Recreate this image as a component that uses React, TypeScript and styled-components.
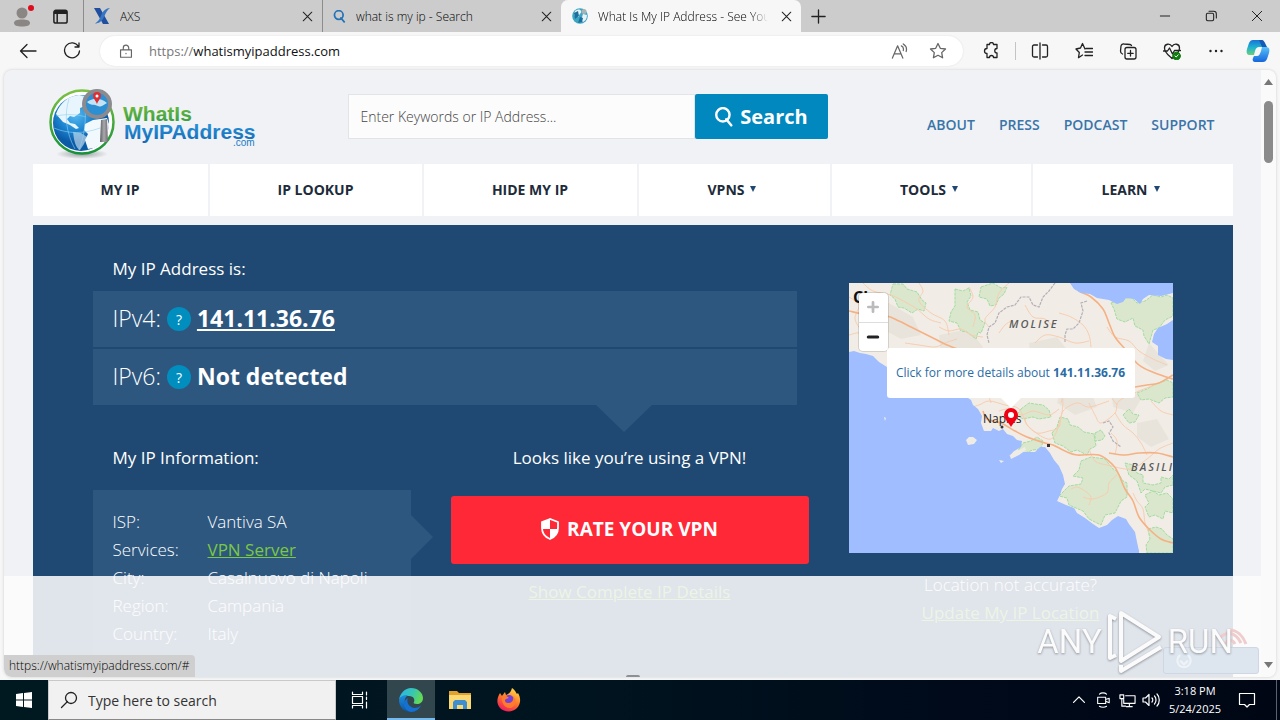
import React from 'react';
import styled, { createGlobalStyle, css } from 'styled-components';

const Global = createGlobalStyle`
  * { box-sizing: border-box; }
  body { margin: 0; font-family: "Open Sans", "Noto Sans", sans-serif; overflow: hidden; }
  button { font: inherit; color: inherit; border: 0; padding: 0; background: none; cursor: pointer; }
  a { color: inherit; }
  svg { display: block; flex: none; }
  h2, p, dl, dd, ul { margin: 0; padding: 0; }
`;

const Desktop = styled.div`
  display: flex;
  flex-direction: column;
  height: 100vh;
  background: #f7f7f7;
`;

/* ---------- browser chrome ---------- */

const TabStrip = styled.header`
  display: flex;
  flex: none;
  height: 32px;
  background: #cccccc;
  color: #000;
  font-size: 12px;
  font-weight: 300;
`;

const StripTools = styled.div`
  display: flex;
  width: 83px;
`;

const IconButton = styled.button<{ $w: number }>`
  width: ${(p) => p.$w}px;
  flex: none;
  display: flex;
  align-items: center;
  justify-content: center;
`;

const Tab = styled.div<{ $active?: boolean }>`
  display: flex;
  align-items: center;
  gap: 10px;
  width: 239px;
  padding: 0 7px 0 10px;
  border-left: 1px solid #8c8c8c;
  ${(p) => p.$active && css`
    width: 240px;
    border-color: #f7f7f7;
    border-radius: 7px 7px 0 0;
    background: #f7f7f7;
  `}
`;

const TabTitle = styled.span<{ $fade?: boolean }>`
  flex: 1;
  overflow: hidden;
  white-space: nowrap;
  ${(p) => p.$fade && css`
    mask-image: linear-gradient(to right, #000 90%, transparent);
  `}
`;

const Spacer = styled.div`
  flex: 1;
`;

const Toolbar = styled.div`
  display: flex;
  flex: none;
  align-items: center;
  height: 38px;
  padding: 0 2px 0 6px;
`;

const AddressBar = styled.div`
  display: flex;
  align-items: center;
  flex: 1;
  height: 30px;
  margin: 0 6px;
  padding: 0 6px 0 19px;
  border-radius: 15px;
  background: #fff;
  box-shadow: 0 0 2px #ddd;
`;

const AddressText = styled.span`
  flex: 1;
  padding-left: 16px;
  font-size: 13px;
  color: #111;
`;

const Scheme = styled.span`
  color: #777;
`;

const Divider = styled.span`
  width: 1px;
  height: 18px;
  margin: 0 2px;
  background: #c4c4c4;
`;

const Viewport = styled.div`
  position: relative;
  display: flex;
  flex: 1;
  min-height: 0;
  margin: 0 4px 3px;
  border-radius: 8px;
  overflow: hidden;
  background: #f0f2f5;
  box-shadow: 0 0 3px #ccc;
`;

const ScrollTrack = styled.div`
  display: flex;
  flex-direction: column;
  align-items: center;
  flex: none;
  width: 15px;
  padding: 9px 0;
  background: #fafafa;
`;

const ScrollThumb = styled.div`
  width: 9px;
  height: 62px;
  margin: 16px 0 auto;
  border-radius: 5px;
  background: #8b8b8b;
`;

const StatusBubble = styled.div`
  position: absolute;
  left: 0;
  bottom: 0;
  padding: 2px 6px 3px 5px;
  border-radius: 0 4px 0 6px;
  background: #cfcfcf;
  color: #000;
  font-size: 12px;
  font-weight: 300;
  line-height: 17px;
`;

/* ---------- web page ---------- */

const Page = styled.div`
  position: relative;
  flex: 1;
  min-width: 0;
  overflow: hidden;
`;

const Container = styled.div`
  max-width: 1200px;
  margin: 0 auto;
`;

const SiteHeader = styled.div`
  display: flex;
  align-items: flex-start;
  height: 94px;
  padding: 18px 18px 0 16px;
`;

const Logo = styled.a`
  display: flex;
  width: 299px;
`;

const SearchForm = styled.form`
  display: flex;
  width: 480px;
  height: 45px;
  margin-top: 6px;
`;

const SearchInput = styled.input`
  flex: 1;
  min-width: 0;
  padding: 0 12px;
  border: 1px solid #e2e5e8;
  background: #fcfcfc;
  color: #555;
  font: 300 14px "Open Sans", sans-serif;
  &::placeholder { color: #444; opacity: 1; }
`;

const SearchButton = styled.button`
  display: flex;
  align-items: center;
  justify-content: center;
  gap: 6px;
  width: 133px;
  border-radius: 2px;
  background: #0088bf;
  color: #fff;
  font-size: 20px;
  font-weight: 700;
`;

const TopLinks = styled.nav`
  display: flex;
  gap: 24px;
  margin: 27px 0 0 auto;
  font-size: 14px;
  line-height: 20px;
  font-weight: 600;
  color: #3a74a8;
  a { text-decoration: none; }
`;

const MainNav = styled.nav`
  display: flex;
  gap: 2px;
  height: 52px;
  margin-bottom: 9px;
`;

const NavItem = styled.a<{ $grow: number }>`
  flex: ${(p) => p.$grow} 1 0;
  display: flex;
  align-items: center;
  justify-content: center;
  gap: 6px;
  padding-bottom: 2px;
  background: #fff;
  color: #1d2b3a;
  font-size: 14px;
  font-weight: 700;
  text-decoration: none;
`;

const Caret = styled.span`
  margin-right: 4px;
  border: 3px solid transparent;
  border-top: 6px solid #1f4972;
  border-bottom: 0;
`;

const Hero = styled.main`
  display: grid;
  grid-template-columns: 1fr 324px;
  gap: 40px;
  min-height: 600px;
  padding: 0 60px;
  background: #1f4972;
  color: #fff;
  font-size: 17px;
  font-weight: 300;
`;

const Label = styled.h2<{ $center?: boolean }>`
  padding: 0 ${(p) => (p.$center ? 0 : 20)}px;
  font-size: 17px;
  line-height: 24px;
  font-weight: 400;
  text-align: ${(p) => (p.$center ? 'center' : 'left')};
`;

const AddressPanel = styled.section`
  padding-top: 32px;
`;

const AddressRows = styled.div`
  position: relative;
  display: grid;
  gap: 2px;
  margin: 10px 12px 0 0;
  &::after {
    content: "";
    position: absolute;
    top: 100%;
    right: 145px;
    border: 28px solid transparent;
    border-top: 27px solid #2d577f;
    border-bottom: 0;
  }
`;

const AddressRow = styled.div`
  display: flex;
  align-items: center;
  gap: 6px;
  height: 56px;
  padding: 0 20px 2px;
  background: #2d577f;
  font-size: 23px;
`;

const HelpButton = styled.button`
  width: 24px;
  height: 24px;
  margin-top: 2px;
  border-radius: 50%;
  background: #008ebf;
  font-size: 14px;
  font-weight: 400;
`;

const Strong = styled.strong`
  font-weight: 700;
`;

const Columns = styled.div`
  display: grid;
  grid-template-columns: 318fr 358fr;
  gap: 40px;
  margin-top: 41px;
`;

const InfoCard = styled.div`
  position: relative;
  min-height: 240px;
  margin-top: 20px;
  padding: 18px 20px;
  background: #2d577f;
  &::after {
    content: "";
    position: absolute;
    top: 25px;
    left: 100%;
    border: 22px solid transparent;
    border-left-color: #2d577f;
    border-right: 0;
  }
`;

const InfoList = styled.dl`
  display: grid;
  grid-template-columns: 95px 1fr;
  line-height: 28px;
`;

const GreenLink = styled.a`
  color: #7bc843;
  font-weight: 400;
`;

const VpnColumn = styled.div`
  display: flex;
  flex-direction: column;
`;

const RateButton = styled.button`
  display: flex;
  align-items: center;
  justify-content: center;
  gap: 8px;
  height: 68px;
  margin: 26px 0 16px;
  padding-bottom: 2px;
  border-radius: 3px;
  background: #ff2837;
  color: #fff;
  font-size: 19px;
  font-weight: 700;
`;

const Centered = styled.p`
  line-height: 24px;
  text-align: center;
`;

const MapColumn = styled.aside`
  padding-top: 58px;
  line-height: 28px;
  text-align: center;
`;

const MapBox = styled.div`
  position: relative;
  height: 270px;
  margin-bottom: 18px;
  overflow: hidden;
  font-size: 12px;
`;

const ZoomControls = styled.div`
  position: absolute;
  top: 10px;
  left: 10px;
  display: grid;
  width: 29px;
  height: 58px;
  border-radius: 4px;
  background: #fff;
  box-shadow: 0 0 0 1px rgba(0, 0, 0, 0.12);
  button { display: grid; place-items: center; }
  button + button { border-top: 1px solid #ddd; }
`;

const Popup = styled.a`
  position: absolute;
  top: 65px;
  left: 38px;
  width: 248px;
  border-radius: 3px;
  background: #fff;
  color: #2a6ca5;
  line-height: 50px;
  font-weight: 400;
  white-space: nowrap;
  text-decoration: none;
  &::after {
    content: "";
    position: absolute;
    top: 100%;
    left: 114px;
    border: 10px solid transparent;
    border-top-color: #fff;
    border-bottom: 0;
  }
`;

const AdOverlay = styled.div`
  position: absolute;
  inset: auto 0 0;
  height: 101px;
  background: rgba(253, 252, 253, 0.87);
`;

const AdCard = styled.div`
  position: absolute;
  right: 2px;
  bottom: 3px;
  width: 96px;
  height: 27px;
  padding: 2px 10px;
  border: 1px solid #cfd8e2;
  border-radius: 3px;
  background: #dde5ee;
`;

const Signal = styled.svg`
  position: absolute;
  right: 12px;
  bottom: 30px;
`;

const AdNotch = styled.div`
  position: absolute;
  bottom: 0;
  left: 50%;
  width: 14px;
  height: 2px;
  margin-left: -7px;
  border-radius: 6px 6px 0 0;
  background: #8c9096;
`;

const Watermark = styled.div`
  position: absolute;
  right: 28px;
  bottom: 4px;
  display: flex;
  align-items: center;
  gap: 5px;
  color: #fbfbfb;
  font: 400 33px/60px Roboto, sans-serif;
  filter: drop-shadow(0 1px 1px rgba(90, 95, 100, 0.6));
`;

/* ---------- taskbar ---------- */

const Taskbar = styled.footer`
  display: flex;
  flex: none;
  height: 40px;
  background: linear-gradient(to right, #001820, #00141f 45%, #000a1a 75%, #000614);
  color: #fff;
`;

const TaskSearch = styled.label`
  display: flex;
  align-items: center;
  gap: 10px;
  width: 288px;
  padding-left: 11px;
  border: 1px solid #c9c9c9;
  border-bottom-color: #888;
  background: #f1f1f1;
  input {
    flex: 1;
    min-width: 0;
    border: 0;
    padding: 0;
    background: none;
    font: 14px "Open Sans", sans-serif;
  }
  input::placeholder { color: #333; opacity: 1; }
`;

const TaskApp = styled.button<{ $active?: boolean }>`
  display: flex;
  align-items: center;
  justify-content: center;
  width: 48px;
  margin-right: 1px;
  border-top: 2px solid transparent;
  border-bottom: 2px solid transparent;
  ${(p) => p.$active && css`
    margin-left: 2px;
    border-bottom-color: #76b9ed;
    background: #32464e;
  `}
`;

const Clock = styled.time`
  width: 64px;
  padding-top: 2px;
  font-size: 11px;
  line-height: 18px;
  text-align: center;
`;

const ShowDesktop = styled.button`
  width: 4px;
  margin-left: 9px;
  border-left: 1px solid #5a636b;
`;

/* ---------- drawings ---------- */

const Line: React.FC<{ d: string; size?: number; color?: string; w?: number; children?: React.ReactNode }> = ({
  d, size = 18, color = '#222', w = 1.3, children,
}) => (
  <svg width={size} height={size} viewBox="0 0 18 18" fill="none" stroke={color} strokeWidth={w}
    strokeLinecap="round" strokeLinejoin="round" aria-hidden="true">
    <path d={d} />
    {children}
  </svg>
);

const STAR = 'M9 1.5l2.3 4.8 5.2.7-3.8 3.6.9 5.2L9 13.3l-4.6 2.5.9-5.2L1.500 7l5.200-.7z';

const CloseIcon = () => <Line size={11} w={1.700} d="M2 2l14 14M16 2L2 16" />;

const ProfileIcon = () => (
  <svg width="24" height="26" viewBox="0 0 24 26" aria-hidden="true">
    <circle cx="12" cy="10" r="5.500" fill="#8a8684" />
    <path d="M4 20c0-2.500 3-3.500 8-3.500s8 1 8 3.500-3 3.500-8 3.500-8-1-8-3.500z" fill="#8a8684" />
    <circle cx="21" cy="5" r="3" fill="#e00b1c" />
  </svg>
);

const AxsIcon = () => (
  <svg width="16" height="16" viewBox="0 0 16 16" aria-hidden="true">
    <path d="M0 0h6l9 16H9z" fill="#1f4f9e" />
    <path d="M16 0c-4 0-7 3-8.500 6.500C6 10 5 13 1 15.500c3.500 0 7-2 9-6.500C11.500 5.500 13 2 16 0z" fill="#3576c4" />
  </svg>
);

const MiniGlobe = () => (
  <svg width="16" height="16" viewBox="0 0 16 16" aria-hidden="true">
    <circle cx="8" cy="8" r="7.800" fill="#3da5c4" />
    <path d="M3 3c3-2 5-2 6 0s-2 3-2 5-3 1-5-1zM11 6l4 1c0 4-2 6-4 7-2-2-1-5 0-8z" fill="#e7f2f4" />
    <path d="M2 5l4-2 1 5-4 3zM8 9l3 1-1 4-4 1z" fill="#1c6f9c" />
    <circle cx="12" cy="3.500" r="2.500" fill="#a8b4b6" />
  </svg>
);

const CopilotIcon = () => (
  <svg width="24" height="24" viewBox="0 0 24 24" aria-hidden="true">
    <defs>
      <linearGradient id="cpa" x1="0" y1="0" x2="0" y2="1">
        <stop offset="0" stopColor="#1773d8" /><stop offset=".5" stopColor="#1fb3cf" /><stop offset="1" stopColor="#6ccf7c" />
      </linearGradient>
      <linearGradient id="cpb" x1="0" y1="0" x2="0" y2="1">
        <stop offset="0" stopColor="#5ac0f7" /><stop offset="1" stopColor="#1467dd" />
      </linearGradient>
    </defs>
    <path d="M7 1h8c2 0 3 2 2 4l-1 3h-3c-2 0-3 1-4 4l-1 4H4c-3 0-4-2-3-6l2-6c1-2 2-3 4-3z" fill="url(#cpa)" />
    <path d="M17 23H9c-2 0-3-2-2-4l1-2h3c2 0 3-2 4-5l1-4h4c3 0 4 2 3 6l-2 6c-1 2-2 3-4 3z" fill="url(#cpb)" />
    <path d="M13 1h3c2 0 3 3 5 7h-5z" fill="#1558b5" />
  </svg>
);

const SiteLogo = () => (
  <svg width="208" height="72" viewBox="0 0 208 72" role="img" aria-label="What Is My IP Address logo">
    <defs>
      <radialGradient id="globe" cx=".4" cy=".35">
        <stop offset="0" stopColor="#58baf0" /><stop offset=".6" stopColor="#1c84cf" /><stop offset="1" stopColor="#0b5aa6" />
      </radialGradient>
      <linearGradient id="ring" x1="0" y1="0" x2="0" y2="1">
        <stop offset="0" stopColor="#7cc142" /><stop offset="1" stopColor="#17913a" />
      </linearGradient>
      <linearGradient id="green" x1="0" y1="0" x2="0" y2="1">
        <stop offset="0" stopColor="#7cbf3e" /><stop offset="1" stopColor="#2f9a45" />
      </linearGradient>
      <linearGradient id="blue" x1="0" y1="0" x2="0" y2="1">
        <stop offset="0" stopColor="#2a9be0" /><stop offset="1" stopColor="#1668b4" />
      </linearGradient>
      <linearGradient id="grip" x1="0" y1="0" x2="1" y2="0">
        <stop offset="0" stopColor="#5f5f63" /><stop offset=".5" stopColor="#a9a9ad" /><stop offset="1" stopColor="#6e6e72" />
      </linearGradient>
      <radialGradient id="shade"><stop offset="0" stopColor="#9a9fa3" /><stop offset="1" stopColor="#9a9fa3" stopOpacity="0" /></radialGradient>
    </defs>
    <ellipse cx="33" cy="66" rx="26" ry="5" fill="url(#shade)" />
    <circle cx="33" cy="34" r="31.500" fill="#fff" stroke="url(#ring)" strokeWidth="2.500" />
    <circle cx="32" cy="35" r="28" fill="url(#globe)" />
    <path d="M7 26C11 15 19 8 30 7l6 1-2 5 2 5-5 2 0 5-6 4-4-1-3 3 3 4 5 1 4 4-3 1-6-4-7-3z" fill="#e9f5fc" />
    <path d="M36 36l8-4 14-2 2 6c0 10-6 20-15 24l-6 1-3-9 3-6-4-4z" fill="#f2f9fd" />
    <path d="M24 44l8 1 6 4-3 7-4 6c-3-1-5-6-6-11z" fill="#eef7fc" opacity=".55" />
    <path d="M5 40c14 6 30 6 46 0M20 11c-5 15-3 34 6 50M7 28c10-2 20-2 30 1M34 8c4 15 3 36-4 54" fill="none" stroke="#8fd0f4" strokeWidth=".6" />
    <path d="M52 32l6-1 1 23h-8z" fill="url(#grip)" />
    <circle cx="48" cy="16" r="13" fill="#2c8ed3" stroke="#8b8b8f" strokeWidth="4" />
    <path d="M38 14c5-4 13-5 20 1-3 1-5 5-9 3s-7 0-11-4z" fill="#c5e2f3" />
    <path d="M48 4a4 4 0 0 1 4 4c0 2-3 5-4 8-1-3-4-6-4-8a4 4 0 0 1 4-4z" fill="#dc2f34" />
    <circle cx="48" cy="8" r="1.500" fill="#fff" />
    <g fontFamily="Liberation Sans" fontWeight="700" fontSize="21">
      <text x="74" y="33" fill="url(#green)">WhatIs</text>
      <text x="75" y="51" fill="url(#blue)">MyIPAddress</text>
    </g>
    <text x="184" y="58" fontSize="10" fontFamily="Liberation Sans" fill="#1c7bc4">.com</text>
  </svg>
);

const SearchIcon: React.FC<{ size: number; color: string; w: number; flip?: boolean }> = ({ size, color, w, flip }) => (
  <Line size={size} color={color} w={w} d={flip ? 'M7.500 10.500L1.500 16.500' : 'M11 11L15.500 16.500'}>
    <circle cx={flip ? 11 : 8} cy="7" r={flip ? 5.500 : 6} />
  </Line>
);

const ShieldIcon = () => (
  <svg width="18" height="22" viewBox="0 0 18 22" aria-hidden="true">
    <path d="M9 1L1 4v6c0 5 3 9 8 11 5-2 8-6 8-11V4z" fill="#ff2837" stroke="#fff" strokeWidth="1.800" />
    <path d="M9 1L1 4v7h8zM9 11v10c5-2 8-6 8-10z" fill="#fff" />
  </svg>
);

/* Turns a list of "x,y" points into a smooth curve through all of them. */
const curve = (list: string) => {
  const p = list.split(' ').map((s) => s.split(',').map(Number));
  let d = `M${p[0][0]} ${p[0][1]}`;
  for (let i = 0; i < p.length - 1; i++) {
    const a = p[Math.max(i - 1, 0)];
    const b = p[i];
    const c = p[i + 1];
    const e = p[Math.min(i + 2, p.length - 1)];
    d += `C${b[0] + (c[0] - a[0]) / 6} ${b[1] + (c[1] - a[1]) / 6} ${c[0] - (e[0] - b[0]) / 6} ${c[1] - (e[1] - b[1]) / 6} ${c[0]} ${c[1]}`;
  }
  return d;
};

const MINOR_ROADS = [
  '0,14 10,22 6,36 14,50', '70,0 74,8 70,18 82,30 96,38 100,52', '160,0 150,10 146,24 136,36 140,44',
  '150,50 156,42 162,38', '14,0 24,8 42,12 58,20 68,26 80,36 92,40', '116,126 130,122 140,118 156,122 170,126 180,144 202,156 212,134 214,116',
  '176,134 178,142 188,150 200,148 210,144 214,128 228,120 240,124 260,118', '240,120 246,132 252,140 266,130 270,118 290,108 306,102',
  '240,166 246,178 258,182 282,186 298,176 310,166 324,160', '262,150 268,158 266,172', '266,130 274,142 284,150 292,160 298,172',
  '284,210 288,218 294,226 296,240 300,250', '268,192 260,200 258,210 244,216 234,214', '210,30 222,34 234,42 240,52 242,64',
  '56,60 70,62 86,64 96,60 108,56', '222,206 228,204 236,208 242,214 240,222', '128,100 130,106 138,110 142,120',
  '150,128 160,126 172,132 184,128 200,132 210,126', '0,52 12,50 22,58 34,62 40,72', '186,60 196,52 210,54 226,60 240,58',
  '120,4 124,14 118,24 126,32 124,44', '258,44 266,54 280,58 290,68 304,76 318,82', '90,44 100,48 112,46 122,52 134,54',
  '302,118 312,128 324,132', '208,96 214,108 212,120', '262,90 266,100 262,112 268,122', '176,22 184,34 196,36 204,44',
];

const MAJOR_ROADS = [
  '0,28 20,32 38,33 50,38 62,44 74,50 86,56 98,62 114,68', '222,0 230,8 242,14 254,26 260,40 266,54 276,66 290,82 306,90 324,96',
  '134,128 138,136 152,140 166,148 178,154 196,160 204,162 216,168 228,172 250,172 264,182 270,192 276,206 284,218 290,234 300,246 312,256 324,260',
  '260,170 276,172 290,170 308,170 324,174', '286,104 298,102 310,100 324,92',
];

const RegionMap = () => (
  <svg width="324" height="270" viewBox="0 0 324 270" role="img" aria-label="Map of the Naples area">
    <rect width="324" height="270" fill="#f1ede6" />
    <g fill="#e9e4db">
      <path d="M10 18l30 2 24 14 8 18-20 4-30-16zM90 52l30-6 14 18-16 14-26-6zM180 60l28-6 16 20-14 16-28-8zM212 102l26-2 10 24-22 8-18-12zM262 106l16-6 14 16-8 14-20-6zM288 140l20-4 12 20-18 8-14-10zM300 60l20 22-14 6-12-10z" />
    </g>
    <g fill="#dae7cd" stroke="#a3dca0" strokeWidth="1" strokeDasharray="3 1" strokeLinejoin="round">
      <path d="M44 1l10 0 4 5 10 3 5 8 4 3-2 8-6-2-6 4-8-5-6-1-3-8-5-4z" />
      <path d="M106 6l8 2 6-3 2 8-4 6 3 8 8 2 2 8 5 3-4 10-3-1-2 7-9-7-6-1-4-8-8-2 2-9 4-6z" />
      <path d="M132 4l12-4 8 5 6-1-3 7-5 4-3 7-6 1-3-7-8-2z" />
      <path d="M262 20l8-3 12-3 6 6 8-2 8-6 8 2 6-2 6 3v18l-8 4-6 8-6 2-4 14-5-8-1-6-8-4-2-8-8 4-8-3-3-10z" />
      <path d="M172 126l8-6 6 1 8 1 6 5 2 7-12 2-6-2-10 2-6-4z" />
      <path d="M203 150l5-6 3-10 8 2 2 6 8 2 6 5 10 2 2 12-6 3-3 6-10-5-6 2-8-6-8-3z" />
      <path d="M288 110l10-4 8-5 12-4 6 3v14l-8 1-6 5-10-4-8 1z" />
      <path d="M274 132l6-6 4 5 6 1-4 7-6 1z" />
      <path d="M174 160l8-2 6-4 6 4-2 8-8 1-8 3-10 2z" />
      <path d="M232 178l10-4 14 2 8 10 4 2 6 10 4 2v14l-6 4-6 12-10 2-4 10-12-6-6-8-14-6-2-7-8-2 10-10 12-2 2-6-10-2 6-6z" />
      <path d="M276 180l8 2 4 8 6 2 0 8 10 2 8-2v-6l8 2 4-4v10l-8 2-4 6-16-4-4 4-4-12-8-6z" />
      <path d="M296 212l8-4 6 4 8-2 6 6v14l-8-2-2 8-8-4-6 2-4-10 4-4z" />
      <path d="M299 246l8-2 6 2 5 6 6 4v14h-26l-1-8 4-6z" />
      <path d="M246 150l6-3 4 6-3 4-7 1z" />
    </g>
    <g fill="none" stroke="#f8cdb0" strokeWidth="1">
      {MINOR_ROADS.map((r) => <path key={r} d={curve(r)} />)}
    </g>
    <g fill="none" stroke="#f5b183" strokeWidth="1.600">
      {MAJOR_ROADS.map((r) => <path key={r} d={curve(r)} />)}
    </g>
    <g fill="none" stroke="#b5afb8" strokeWidth="1.200" strokeDasharray="3 1">
      <path d="M206 0l-6 8-6 6-4 10-6-2-4-8-8 0-6 8-8 2-8 6-4 10-6 4-2 8 2 8M238 18l-6 2 2 8-4 12-6 6-6 0-2 6 0 8M254 140l6-2 4 6-4 6 4 8 8 6" />
    </g>
    <g fill="#9fbdff">
      <path d="M0 69l5-1 6 2 6 1 7 2 6 6 8 5 16 14 24 10 17 0 24 7 3 2 2 5 5 4 4 7-1 7 3 8h7l2-3 6 3 4-2 4 5 6 2 4 4 5 1-1 6-5 3-7 6 8-2 5-2 8 0 5 0 5-5h5l5 6 4 7 5 6 4 9 2 9-3 5-2 6-3 6 9 4 8 3 3 5 8 5 8 6 6 4 8-3 5-5 6-4 8 3 3 5 6 8 2 10 2 9V270H0z" />
      <path d="M221 0l4 6 7 4 9 1 7 4 12 2 8 4 6-2 3-4 8 1 6 5 3-5 6-4 12 1 12-3V0zM324 37l-6 4-9 4-4 6-2 8 6 4 0 9 8 4 7 1z" />
    </g>
    <g fill="#efece5">
      <path d="M117 157l3-3 4 0 4 3-3 4-6 1zM150 177l5 1-3 2zM161 173l4-5 5-1 6-3 1 3-7 5-8 4zM35 134l2 1-1 3z" />
    </g>
    <g fill="#5c5c5c" fontFamily="Open Sans" fontSize="11" fontStyle="italic" fontWeight="600" letterSpacing="2">
      <text x="160" y="45">MOLISE</text>
      <text x="282" y="188">BASILI</text>
    </g>
    <text x="4" y="20" fontSize="16" fontFamily="Open Sans" fontWeight="700" fill="#111">Ch</text>
    <text x="134" y="140" fontSize="12" fontFamily="Open Sans" fontWeight="500" fill="#222">Naples</text>
    <circle cx="153" cy="144" r="1.500" fill="#333" />
    <rect x="198" y="161" width="3" height="3" fill="#333" />
    <path d="M162 125a7 7 0 0 1 7 7c0 4-5 8-7 12-2-4-7-8-7-12a7 7 0 0 1 7-7z" fill="#f00012" />
    <circle cx="162" cy="132" r="3" fill="#fff" />
  </svg>
);

const EdgeIcon = () => (
  <svg width="24" height="24" viewBox="0 0 24 24" aria-hidden="true">
    <defs>
      <linearGradient id="eg" x1="0" y1="0" x2="1" y2=".3">
        <stop offset="0" stopColor="#2bb4ec" /><stop offset=".6" stopColor="#37c6b4" /><stop offset="1" stopColor="#62d957" />
      </linearGradient>
      <linearGradient id="eb" x1="0" y1="0" x2="0" y2="1">
        <stop offset="0" stopColor="#1c8ede" /><stop offset="1" stopColor="#0c55a8" />
      </linearGradient>
    </defs>
    <path d="M0 12C1 5 6 0 12 0c7 0 12 5 12 10 0 4-3 6-6 6-3 0-4-1-3-2 1-2 0-6-5-6C5 8 1 9 0 12z" fill="url(#eg)" />
    <path d="M0 12c1-4 5-5 9-5-3 2-4 5-3 8 1 5 6 8 14 5-2 3-5 4-8 4C5 24 0 19 0 12z" fill="url(#eb)" />
    <path d="M9 10c-2 4 1 9 6 10 3 0 6-1 7-3-1 4-6 7-10 7-4-1-7-4-7-8 0-3 2-5 4-6z" fill="#1570cf" />
  </svg>
);

const FolderIcon = () => (
  <svg width="22" height="20" viewBox="0 0 22 20" aria-hidden="true">
    <path d="M0 1h8l2 2h12v16H0z" fill="#e0a12f" />
    <path d="M0 5h22v14H0z" fill="#fbd872" />
    <path d="M4 19v-7l2-2h10l2 2v7h-4v-4H8v4z" fill="#3f8fd0" />
  </svg>
);

const FirefoxIcon = () => (
  <svg width="24" height="24" viewBox="0 0 24 24" aria-hidden="true">
    <defs>
      <linearGradient id="ff" x1=".8" y1="0" x2=".3" y2="1">
        <stop offset="0" stopColor="#ffe14a" /><stop offset=".5" stopColor="#ff7a2a" /><stop offset="1" stopColor="#ef1a5c" />
      </linearGradient>
    </defs>
    <path d="M3 5l2 3 3-4 1 3c3-1 5-3 6-7 4 3 4 5 5 6l1-1c3 5 3 11-1 15-5 5-13 4-17 0-4-5-3-10 0-15z" fill="url(#ff)" />
    <circle cx="12" cy="12" r="5" fill="#7541d8" />
    <path d="M5 8c3-1 5 0 7 2l-3 1c-2 1-1 4 2 4 4 0 6-3 5-7 4 4 3 11-3 12-6 0-9-6-8-12z" fill="#ff7a2c" />
  </svg>
);

/* ---------- data ---------- */

const NAV = [
  { label: 'MY IP', grow: 175 },
  { label: 'IP LOOKUP', grow: 212 },
  { label: 'HIDE MY IP', grow: 213 },
  { label: 'VPNS', grow: 191, menu: true },
  { label: 'TOOLS', grow: 199, menu: true },
  { label: 'LEARN', grow: 200, menu: true },
];

const INFO: [string, React.ReactNode][] = [
  ['ISP:', 'Vantiva SA'],
  ['Services:', <GreenLink href="#">VPN Server</GreenLink>],
  ['City:', 'Casalnuovo di Napoli'],
  ['Region:', 'Campania'],
  ['Country:', 'Italy'],
];

const BrowserTab: React.FC<{ icon: React.ReactNode; title: string; active?: boolean }> = ({ icon, title, active }) => (
  <Tab $active={active}>
    {icon}
    <TabTitle $fade={active}>{title}</TabTitle>
    <IconButton $w={16} aria-label={`Close ${title}`}><CloseIcon /></IconButton>
  </Tab>
);

export default function App() {
  return (
    <Desktop>
      <Global />
      <TabStrip>
        <StripTools>
          <IconButton $w={44} aria-label="Profile"><ProfileIcon /></IconButton>
          <IconButton $w={32} aria-label="Tab actions">
            <Line size={17} w={1.600} d="M2 4.500a2 2 0 0 1 2-2h10a2 2 0 0 1 2 2V14a2 2 0 0 1-2 2H4a2 2 0 0 1-2-2zM2.500 4h13M2.500 5.500h13M5.500 6v10" />
          </IconButton>
        </StripTools>
        <BrowserTab icon={<AxsIcon />} title="AXS" />
        <BrowserTab icon={<SearchIcon size={13} color="#2472b8" w={2.400} />} title="what is my ip - Search" />
        <BrowserTab icon={<MiniGlobe />} title="What Is My IP Address - See Your" active />
        <IconButton $w={34} aria-label="New tab"><Line size={17} w={1.400} d="M9 2v14M2 9h14" /></IconButton>
        <Spacer />
        <IconButton $w={46} aria-label="Minimize"><Line size={12} w={1.500} d="M2 9h14" /></IconButton>
        <IconButton $w={46} aria-label="Restore">
          <Line size={12} w={1.600} d="M2 7a2 2 0 0 1 2-2h7a2 2 0 0 1 2 2v7a2 2 0 0 1-2 2H4a2 2 0 0 1-2-2zM6 2h7a4 4 0 0 1 4 4v6" />
        </IconButton>
        <IconButton $w={46} aria-label="Close window"><Line size={12} w={1.500} d="M2 2l14 14M16 2L2 16" /></IconButton>
      </TabStrip>

      <Toolbar>
        <IconButton $w={44} aria-label="Back"><Line d="M1.500 9h15.500M8 2.500L1.500 9 8 15.500" /></IconButton>
        <IconButton $w={44} aria-label="Refresh"><Line d="M15.500 4.500A7.500 7.500 0 1 0 16.500 9M16 1v4h-4" /></IconButton>
        <AddressBar>
          <Line size={14} color="#666" w={1.500} d="M2 7.500h14V17H2zM5.500 7.500V5a3.500 3.500 0 0 1 7 0v2.500M9 12v.5" />
          <AddressText><Scheme>https://</Scheme>whatismyipaddress.com</AddressText>
          <IconButton $w={40} aria-label="Read aloud">
            <Line color="#666" size={17} d="M1.500 16L7 3l5.500 13M3.500 11.500h7M11 3c2 1 2.500 3 2 5M13 1c3 2 4 5 3 8" />
          </IconButton>
          <IconButton $w={38} aria-label="Add to favorites"><Line color="#666" d={STAR} /></IconButton>
        </AddressBar>
        <IconButton $w={44} aria-label="Extensions">
          <Line d="M5 2.500h2.500a2 2 0 0 1 4 0H15v4a2 2 0 0 0 0 4.500v4.500h-3.500a2 2 0 0 0-4 0H5V11.500a2.500 2.500 0 0 1 0-5z" />
        </IconButton>
        <Divider />
        <IconButton $w={44} aria-label="Split screen"><Line d="M9 1v16M6.500 3H3a1.500 1.500 0 0 0-1.500 1.500v9A1.500 1.500 0 0 0 3 15h3.500M11.500 3H15a1.500 1.500 0 0 1 1.500 1.500v9A1.500 1.500 0 0 1 15 15h-3.500" /></IconButton>
        <IconButton $w={44} aria-label="Favorites"><Line d="M10 7L7.500 1.500 5.500 6 1 7l3.300 3.500-.8 5.200L7.500 13M11 6.500h6.500M10 10h7.500M10 13.500h7.500" /></IconButton>
        <IconButton $w={44} aria-label="Collections"><Line d="M6 7.500a2 2 0 0 1 2-2h7a2 2 0 0 1 2 2V15a2 2 0 0 1-2 2H8a2 2 0 0 1-2-2zM11.500 8.500V14M8.700 11.300h5.500M3.500 12A3 3 0 0 1 1.500 9L2 4a2.500 2.500 0 0 1 3-2l6 .5a2 2 0 0 1 1.500 1" /></IconButton>
        <IconButton $w={44} aria-label="Browser essentials">
          <Line d="M9 4.500C7 1 1.500 1.500 1.500 6c0 5 5 8 7.500 10.500C11.500 14 16.500 11 16.500 6c0-4.500-5.500-5-7.500-1.500zM.5 9h4L6.500 6l3 6 2-3.500h6">
            <circle cx="13.500" cy="14" r="3.800" fill="#107c10" stroke="#107c10" strokeWidth="1" />
            <path d="M12 14l1.200 1 2-2.200" stroke="#fff" strokeWidth="1" />
          </Line>
        </IconButton>
        <IconButton $w={44} aria-label="Settings and more"><Line w={2.400} d="M3.500 9h0M9 9h0M14.500 9h0" /></IconButton>
        <IconButton $w={40} aria-label="Copilot"><CopilotIcon /></IconButton>
      </Toolbar>

      <Viewport>
        <Page>
          <Container>
            <SiteHeader>
              <Logo href="#"><SiteLogo /></Logo>
              <SearchForm>
                <SearchInput aria-label="Search" placeholder="Enter Keywords or IP Address..." />
                <SearchButton type="button"><SearchIcon size={20} color="#fff" w={2.200} />Search</SearchButton>
              </SearchForm>
              <TopLinks>
                <a href="#">ABOUT</a><a href="#">PRESS</a><a href="#">PODCAST</a><a href="#">SUPPORT</a>
              </TopLinks>
            </SiteHeader>
            <MainNav>
              {NAV.map((n) => (
                <NavItem key={n.label} href="#" $grow={n.grow}>{n.label}{n.menu && <Caret />}</NavItem>
              ))}
            </MainNav>
            <Hero>
              <AddressPanel>
                <Label>My IP Address is:</Label>
                <AddressRows>
                  <AddressRow>
                    IPv4:<HelpButton aria-label="About IPv4">?</HelpButton>
                    <a href="#"><Strong>141.11.36.76</Strong></a>
                  </AddressRow>
                  <AddressRow>
                    IPv6:<HelpButton aria-label="About IPv6">?</HelpButton>
                    <Strong>Not detected</Strong>
                  </AddressRow>
                </AddressRows>
                <Columns>
                  <section>
                    <Label>My IP Information:</Label>
                    <InfoCard>
                      <InfoList>
                        {INFO.map(([k, v]) => (
                          <React.Fragment key={k}><dt>{k}</dt><dd>{v}</dd></React.Fragment>
                        ))}
                      </InfoList>
                    </InfoCard>
                  </section>
                  <VpnColumn>
                    <Label $center>Looks like you’re using a VPN!</Label>
                    <RateButton><ShieldIcon />RATE YOUR VPN</RateButton>
                    <Centered><GreenLink href="#">Show Complete IP Details</GreenLink></Centered>
                  </VpnColumn>
                </Columns>
              </AddressPanel>
              <MapColumn>
                <MapBox>
                  <RegionMap />
                  <ZoomControls>
                    <button aria-label="Zoom in"><Line size={14} color="#bbb" w={3.500} d="M9 3v12M3 9h12" /></button>
                    <button aria-label="Zoom out"><Line size={14} color="#222" w={4} d="M3 9h12" /></button>
                  </ZoomControls>
                  <Popup href="#">Click for more details about <Strong>141.11.36.76</Strong></Popup>
                </MapBox>
                <p>Location not accurate?</p>
                <p><GreenLink href="#">Update My IP Location</GreenLink></p>
              </MapColumn>
            </Hero>
          </Container>
          <AdOverlay>
            <AdNotch />
            <AdCard>
              <Line size={20} color="#eef3f7" w={2} d="M5 5a6 6 0 1 0 8 0M6 10l3 3 3-3" />
            </AdCard>
            <Signal width="34" height="20" viewBox="0 0 34 20" fill="none" stroke="#f0cdcd" strokeWidth="3" aria-hidden="true">
              <path d="M4 12c6-8 16-8 22 4M10 17c4-6 8-4 10 0M14 3c8 0 14 6 17 14" />
            </Signal>
            <Watermark>
              ANY
              <svg width="56" height="62" viewBox="0 0 56 62" fill="none" stroke="#fbfbfb" strokeWidth="4" strokeLinejoin="round" aria-hidden="true">
                <path d="M9 8L3 5v42l6-3M14 2l38 24-38 24z" />
                <path d="M14 54v6l40-24" />
              </svg>
              RUN
            </Watermark>
          </AdOverlay>
        </Page>
        <ScrollTrack>
          <svg width="9" height="6" viewBox="0 0 9 6"><path d="M4.500 0L9 6H0z" fill="#777" /></svg>
          <ScrollThumb />
          <svg width="9" height="6" viewBox="0 0 9 6"><path d="M4.500 6L9 0H0z" fill="#777" /></svg>
        </ScrollTrack>
        <StatusBubble>https://whatismyipaddress.com/#</StatusBubble>
      </Viewport>

      <Taskbar>
        <IconButton $w={48} aria-label="Start">
          <svg width="16" height="16" viewBox="0 0 16 16"><path d="M0 2l7-1v6.500H0zM8 1l8-1v7.500H8zM0 8.500h7V15l-7-1zM8 8.500h8V16l-8-1z" fill="#fff" /></svg>
        </IconButton>
        <TaskSearch>
          <SearchIcon size={18} color="#222" w={1.300} flip />
          <input aria-label="Search Windows" placeholder="Type here to search" />
        </TaskSearch>
        <TaskApp aria-label="Task view">
          <Line size={18} color="#fff" w={1.200} d="M1.500 1v2.500h10V1M1.500 5.500h10v7h-10zM1.500 17v-2.500h10V17M15.500 1v3M15.500 6v2.500M15.500 11v6" />
        </TaskApp>
        <TaskApp $active aria-label="Microsoft Edge"><EdgeIcon /></TaskApp>
        <TaskApp aria-label="File Explorer"><FolderIcon /></TaskApp>
        <TaskApp aria-label="Firefox"><FirefoxIcon /></TaskApp>
        <Spacer />
        <IconButton $w={24} aria-label="Show hidden icons"><Line size={14} color="#fff" w={1.600} d="M2 12l7-7 7 7" /></IconButton>
        <IconButton $w={24} aria-label="Meet now"><Line size={16} color="#fff" w={1.200} d="M3 6h9v7H3zM12 8.500L16 7v5l-4-1.500M5 2.500c2-2 6-2 8 0M5 16c2 1.500 6 1.500 8 0" /></IconButton>
        <IconButton $w={24} aria-label="Network"><Line size={17} color="#fff" w={1.200} d="M7 4h10v8H5V8M1 3h4v4H1zM3 7v8h4M11 12v3M8 15.500h6" /></IconButton>
        <IconButton $w={24} aria-label="Volume"><Line size={18} color="#fff" w={1.200} d="M1 7h2.500L7 3.500v11L3.500 11H1zM10 7c1 1 1 3 0 4M12.500 5c2 2 2 6 0 8M15 3c3 3 3 9 0 12" /></IconButton>
        <Clock>3:18 PM<br />5/24/2025</Clock>
        <IconButton $w={40} aria-label="Notifications"><Line size={18} color="#fff" w={1.200} d="M1.500 2.500h15v11h-5L9 16l-2.500-2.500h-5z" /></IconButton>
        <ShowDesktop aria-label="Show desktop" />
      </Taskbar>
    </Desktop>
  );
}
